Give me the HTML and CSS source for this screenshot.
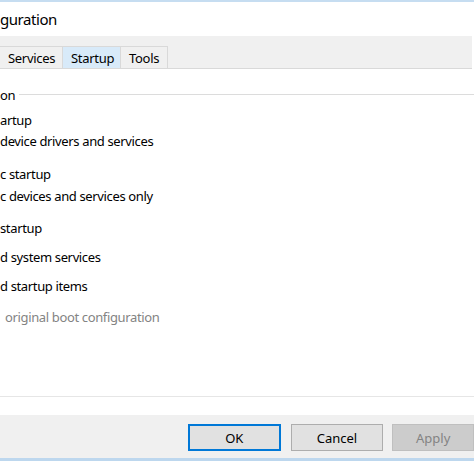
FILE: index.html
```html
<!DOCTYPE html>
<html>
<head>
<meta charset="utf-8">
<link rel="stylesheet" href="styles.css">
</head>
<body>
<div class="window">
  <div class="topline"></div>
  <div class="title">guration</div>
  <div class="tabstrip">
    <div class="tab tab-first">Services</div>
    <div class="tab tab-hover">Startup</div>
    <div class="tab">Tools</div>
  </div>
  <div class="content">
    <div class="legend"><span class="legend-text">on</span><span class="legend-line"></span></div>
    <div class="row r1">artup</div>
    <div class="row r2">device drivers and services</div>
    <div class="row r3">c startup</div>
    <div class="row r4">c devices and services only</div>
    <div class="row r5">startup</div>
    <div class="row r6">d system services</div>
    <div class="row r7">d startup items</div>
    <div class="row r8 disabled">original boot configuration</div>
  </div>
  <div class="sep"></div>
  <div class="spacer"></div>
  <div class="footer">
    <button class="btn btn-default">OK</button>
    <button class="btn">Cancel</button>
    <button class="btn btn-disabled">Apply</button>
  </div>
  <div class="bottomline"></div>
</div>
</body>
</html>
```
FILE: styles.css
```css
html, body {
  margin: 0;
  padding: 0;
  background: #ffffff;
}
body {
  width: 474px;
  height: 461px;
  overflow: hidden;
  font-family: "Noto Sans", "DejaVu Sans", sans-serif;
  color: #000;
}
.window {
  display: flex;
  flex-direction: column;
  height: 461px;
}
.topline {
  height: 2px;
  background: #c6ddf1;
}
.title {
  height: 34px;
  line-height: 35px;
  font-size: 15px;
  letter-spacing: -0.45px;
}
.tabstrip {
  height: 32px;
  background: #f0f0f0;
  border-bottom: 1px solid #d9d9d9;
  display: flex;
  align-items: flex-end;
  margin-right: 2px;
}
.tab {
  height: 22px;
  line-height: 22px;
  font-size: 13px;
  letter-spacing: -0.3px;
  padding: 0 6px 0 8px;
  border-right: 1px solid #d9d9d9;
  border-top: 1px solid #d9d9d9;
  background: #f0f0f0;
  box-sizing: border-box;
}
.tab-first {
  width: 63px;
}
.tab-hover {
  background: #d8eaf9;
  width: 58px;
}
.tab:last-child {
  width: 47px;
}
.content {
  height: 327px;
  display: flex;
  flex-direction: column;
  font-size: 13px;
  letter-spacing: -0.36px;
}
.legend {
  display: flex;
  align-items: center;
  height: 20px;
  margin-top: 16px;
}
.legend-text {
  padding-right: 4px;
}
.legend-line {
  flex: 1;
  height: 1px;
  background: #dcdcdc;
  margin-top: -2px;
}
.row {
  height: 20px;
  line-height: 20px;
  white-space: nowrap;
}
.r1 { margin-top: 5px; }
.r2 { margin-top: 1px; }
.r3 { margin-top: 13px; }
.r4 { margin-top: 2px; }
.r5 { margin-top: 12px; }
.r6 { margin-top: 9px; }
.r7 { margin-top: 9px; }
.r8 { margin-top: 11px; padding-left: 5px; }
.disabled {
  color: #838383;
}
.sep {
  height: 1px;
  background: #e6e6e6;
}
.spacer {
  height: 18px;
}
.footer {
  height: 43px;
  background: #f0f0f0;
  display: flex;
  align-items: flex-start;
  padding-top: 9px;
  box-sizing: border-box;
  padding-left: 188px;
  gap: 9px;
}
.btn {
  font-family: "Noto Sans", "DejaVu Sans", sans-serif;
  font-size: 13px;
  height: 27px;
  width: 93px;
  margin: 0;
  padding: 0;
  background: #e1e1e1;
  border: 1px solid #adadad;
  color: #000;
}
.btn-default {
  border: 2px solid #0078d7;
  margin-right: 1px;
}
.btn-disabled {
  background: #cccccc;
  border-color: #bfbfbf;
  color: #838383;
  width: 82px;
}
.bottomline {
  height: 3px;
  background: #bdd7ee;
}
```
